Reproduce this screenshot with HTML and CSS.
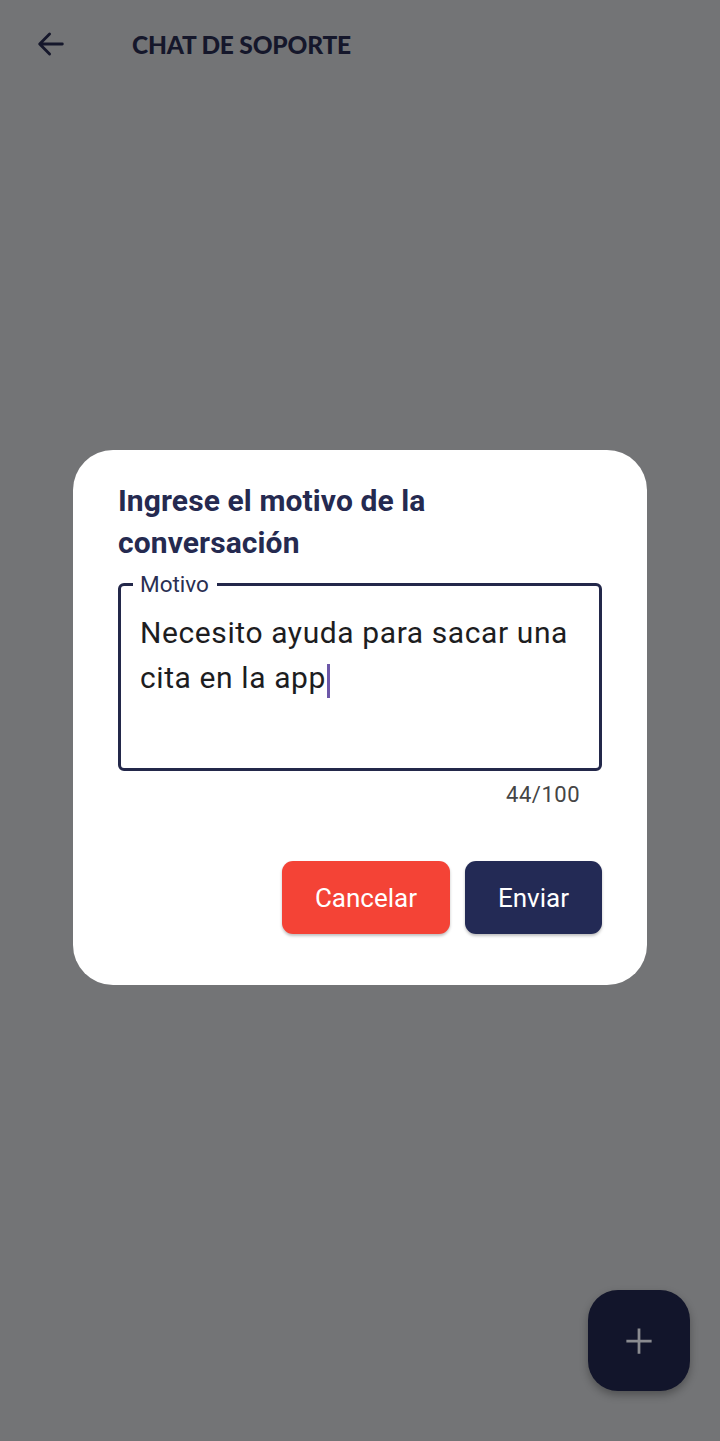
FILE: index.html
```html
<!DOCTYPE html>
<html lang="es">
<head>
  <meta charset="UTF-8" />
  <title>Chat de soporte</title>
  <link rel="stylesheet" href="styles.css">
</head>
<body>
  <header class="topbar">
    <a class="back" href="#">
      <svg width="34" height="34" viewBox="0 0 24 24" fill="none" stroke="#15172b" stroke-width="2" stroke-linecap="round" stroke-linejoin="round">
        <path d="M20 12H4.5M11 5l-7 7 7 7"/>
      </svg>
    </a>
    <h1>CHAT DE SOPORTE</h1>
  </header>

  <div class="dialog">
    <h2>Ingrese el motivo de la conversación</h2>

    <div class="field">
      <span class="field-label">Motivo</span>
      <p class="field-text">Necesito ayuda para sacar una cita en la app<span class="cursor"></span></p>
    </div>
    <p class="counter">44/100</p>

    <div class="actions">
      <button class="btn btn-cancel">Cancelar</button>
      <button class="btn btn-send">Enviar</button>
    </div>
  </div>

  <button class="fab">
    <svg width="30" height="30" viewBox="0 0 24 24" stroke="#8a8b90" stroke-width="2.2" stroke-linecap="square">
      <path d="M12 3v18M3 12h18"/>
    </svg>
  </button>
</body>
</html>
```

FILE: styles.css
```css
body {
  margin: 0;
  height: 1441px;
  background: #737476;
  font-family: Roboto, "Noto Sans", sans-serif;
  position: relative;
  overflow: hidden;
}

.topbar {
  display: flex;
  align-items: center;
  height: 88px;
  padding-left: 34px;
}

.back {
  display: flex;
  width: 34px;
  height: 34px;
}

.topbar h1 {
  margin: 0 0 0 64px;
  font-family: Lato, "Open Sans", sans-serif;
  font-weight: 900;
  font-size: 24.5px;
  letter-spacing: -0.2px;
  color: #15172b;
}

.dialog {
  position: absolute;
  left: 73px;
  top: 450px;
  width: 574px;
  box-sizing: border-box;
  padding: 30px 45px 51px;
  background: #fff;
  border-radius: 40px;
}

.dialog h2 {
  margin: 0;
  font-size: 30px;
  line-height: 42px;
  font-weight: 700;
  letter-spacing: 0.1px;
  color: #252a50;
  max-width: 420px;
}

.field {
  position: relative;
  margin-top: 19px;
  height: 188px;
  box-sizing: border-box;
  border: 3px solid #23284a;
  border-radius: 6px;
  padding: 24px 19px 0;
}

.field-label {
  position: absolute;
  top: -14px;
  left: 12px;
  padding: 0 8px 0 7px;
  background: #fff;
  font-size: 22.5px;
  line-height: 24px;
  color: #2a2f52;
}

.field-text {
  margin: 0;
  font-size: 30px;
  line-height: 45px;
  letter-spacing: 0.6px;
  color: #1d1d1f;
}

.cursor {
  display: inline-block;
  width: 3px;
  height: 34px;
  margin-left: 1px;
  vertical-align: -10px;
  background: #6c57a8;
}

.counter {
  margin: 11px 22px 0 0;
  text-align: right;
  font-size: 22px;
  line-height: 26px;
  letter-spacing: 0.5px;
  color: #454545;
}

.actions {
  display: flex;
  justify-content: flex-end;
  gap: 15px;
  margin-top: 53px;
}

.btn {
  height: 73px;
  border: none;
  border-radius: 11px;
  color: #fff;
  font-family: Roboto, sans-serif;
  font-size: 26px;
  font-weight: 400;
  box-shadow: 0 2px 3px rgba(0, 0, 0, 0.25);
  cursor: pointer;
}

.btn-cancel {
  width: 168px;
  background: #f44336;
}

.btn-send {
  width: 137px;
  background: #232a55;
}

.fab {
  position: absolute;
  right: 30px;
  bottom: 50px;
  width: 102px;
  height: 101px;
  border: none;
  border-radius: 30px;
  background: #12152b;
  display: flex;
  align-items: center;
  justify-content: center;
  box-shadow: 0 4px 8px rgba(0, 0, 0, 0.3);
}
```
